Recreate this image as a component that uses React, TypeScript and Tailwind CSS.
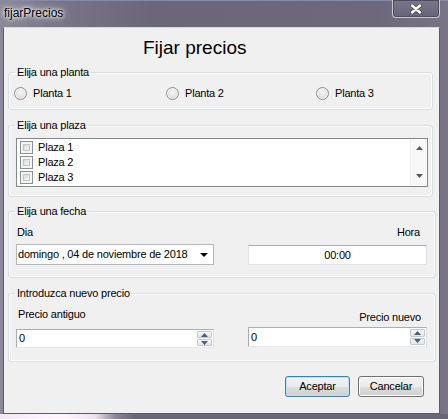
import React from "react";

function Group({ label, className, children }: { label: string; className: string; children?: React.ReactNode }) {
  return (
    <fieldset className={`border border-[#d5dfe5] rounded-[3px] ml-[4px] min-w-0 shadow-[inset_0_0_0_1px_#fbfbfb] ${className}`}>
      <legend className="ml-[6px] px-[2px] text-[11px] leading-[13px] tracking-[-0.2px]">{label}</legend>
      {children}
    </fieldset>
  );
}

function Radio({ label, w }: { label: string; w: string }) {
  return (
    <div className={`flex items-center gap-[6px] ${w}`}>
      <span className="w-[13px] h-[13px] rounded-full border border-[#8e8f8f] bg-[radial-gradient(circle_at_50%_40%,#f8f8f8_0%,#e4e4e4_50%,#c6c6c6_100%)] shadow-[inset_0_0_0_1px_#f6f6f6]" />
      <span className="text-[11px] leading-[13px] tracking-[-0.2px]">{label}</span>
    </div>
  );
}

function Check({ label }: { label: string }) {
  return (
    <div className="h-[15px] flex items-center gap-[5px]">
      <span className="w-[13px] h-[13px] border border-[#8e8f8f] bg-[#f4f4f4] p-[2px] flex">
        <span className="flex-1 border border-[#c4c4c4] bg-[linear-gradient(135deg,#d9d9d9,#f7f7f7)]" />
      </span>
      <span className="text-[11px] leading-[13px] tracking-[-0.2px]">{label}</span>
    </div>
  );
}

function Spinner() {
  return (
    <div className="w-[15px] h-full flex flex-col gap-[1px] py-[1px] mr-[1px]">
      <div className="flex-1 border border-[#c3c7cd] rounded-[1px] bg-[linear-gradient(#f7f7f7,#e2e4e7)] flex items-center justify-center">
        <svg width="7" height="4" viewBox="0 0 7 4"><path d="M0 4 L3.5 0 L7 4 Z" fill="#4b5e80" /></svg>
      </div>
      <div className="flex-1 border border-[#c3c7cd] rounded-[1px] bg-[linear-gradient(#f7f7f7,#e2e4e7)] flex items-center justify-center">
        <svg width="7" height="4" viewBox="0 0 7 4"><path d="M0 0 L7 0 L3.5 4 Z" fill="#4b5e80" /></svg>
      </div>
    </div>
  );
}

export default function App() {
  return (
    <div className="w-[448px] h-[419px] flex flex-col overflow-hidden font-['Liberation_Sans',Arial,sans-serif] text-black bg-[linear-gradient(90deg,#8c8998_0px,#7a7789_50px,#6b6779_150px,#6d697a_380px,#797586_448px)]">
      {/* title bar */}
      <div className="h-[27px] shrink-0 flex items-start shadow-[inset_0_1px_0_#7f8cb0]">
        <div className="pl-[4px] pt-[6px] text-[12px] leading-[14px] text-black [text-shadow:0_0_5px_#fff,0_0_3px_#fff,0_0_8px_#e8e4f0]">
          fijarPrecios
        </div>
        <div className="ml-auto mr-[8px] w-[48px] h-[18px] rounded-b-[4px] border border-t-0 border-[#c9c7d2] shadow-[inset_0_0_0_1px_#4f4c5c] bg-[linear-gradient(#7a778a,#67647a)] flex items-center justify-center">
          <svg width="12" height="10" viewBox="0 0 12 10">
            <path d="M2 1.5 L10 8.5 M10 1.5 L2 8.5" stroke="#4a4858" strokeWidth="4" strokeLinecap="round" />
            <path d="M2 1.5 L10 8.5 M10 1.5 L2 8.5" stroke="#ffffff" strokeWidth="2.4" strokeLinecap="round" />
          </svg>
        </div>
      </div>

      {/* client area */}
      <div className="h-[387px] shrink-0 ml-[3px] mr-[8px] border border-[#5d5b66] border-t-[#d9d8de] bg-[#f0f0f0] flex flex-col">
        <div className="mt-[8px] h-[24px] ml-[139px] text-[19px] leading-[24px]">Fijar precios</div>

        <Group label="Elija una planta" className="w-[425px] h-[44px] mt-[6px]">
          <div className="flex items-center pl-[5px] pt-[8px]">
            <Radio label="Planta 1" w="w-[152px]" />
            <Radio label="Planta 2" w="w-[150px]" />
            <Radio label="Planta 3" w="w-[100px]" />
          </div>
        </Group>

        <Group label="Elija una plaza" className="w-[425px] h-[78px] mt-[9px]">
          <div className="ml-[7px] mt-[6px] w-[412px] h-[49px] border border-[#828790] bg-white flex">
            <div className="flex-1 pt-[1px] pl-[3px] flex flex-col">
              <Check label="Plaza 1" />
              <Check label="Plaza 2" />
              <Check label="Plaza 3" />
            </div>
            <div className="w-[17px] h-full bg-[#f8f8f8] border-l border-[#eeeeee] flex flex-col justify-between items-center pt-[7px] pb-[8px]">
              <svg width="7" height="4" viewBox="0 0 7 4"><path d="M0 4 L3.5 0 L7 4 Z" fill="#5a5a5a" /></svg>
              <svg width="7" height="4" viewBox="0 0 7 4"><path d="M0 0 L7 0 L3.5 4 Z" fill="#5a5a5a" /></svg>
            </div>
          </div>
        </Group>

        <Group label="Elija una fecha" className="w-[428px] h-[73px] mt-[8px]">
          <div className="flex items-start">
            <div className="ml-[7px] w-[198px] pt-[8px] flex flex-col">
              <div className="pl-[1px] text-[11px] leading-[13px] tracking-[-0.2px]">Dia</div>
              <div className="mt-[5px] h-[21px] border border-[#b4b7bd] bg-white flex items-center pl-[1px] pr-[5px]">
                <span className="text-[11px] leading-[13px] tracking-[-0.2px]">domingo , 04 de noviembre de 2018</span>
                <svg className="ml-auto" width="8" height="4" viewBox="0 0 8 4"><path d="M0 0 L8 0 L4 4 Z" fill="#000" /></svg>
              </div>
            </div>
            <div className="ml-[34px] w-[179px] pt-[8px] flex flex-col">
              <div className="text-right pr-[7px] text-[11px] leading-[13px] tracking-[-0.2px]">Hora</div>
              <div className="mt-[6px] h-[20px] border border-[#dfe3e8] border-t-[#abadb3] bg-white flex items-center justify-center text-[11px] leading-[13px] tracking-[-0.2px]">
                00:00
              </div>
            </div>
          </div>
        </Group>

        <Group label="Introduzca nuevo precio" className="w-[428px] h-[75px] mt-[9px]">
          <div className="flex items-start">
            <div className="ml-[7px] w-[198px] pt-[8px] flex flex-col">
              <div className="pl-[2px] text-[11px] leading-[13px] tracking-[-0.2px]">Precio antiguo</div>
              <div className="mt-[8px] h-[19px] border border-[#abadb3] border-b-[#e3e9ef] border-r-[#dbdfe6] bg-white flex items-center">
                <span className="flex-1 pl-[2px] text-[11px] leading-[13px]">0</span>
                <Spinner />
              </div>
            </div>
            <div className="ml-[34px] w-[179px] pt-[11px] flex flex-col">
              <div className="text-right pr-[6px] text-[11px] leading-[13px] tracking-[-0.2px]">Precio nuevo</div>
              <div className="mt-[3px] h-[20px] border border-[#abadb3] border-b-[#e3e9ef] border-r-[#dbdfe6] bg-white flex items-center">
                <span className="flex-1 pl-[2px] text-[11px] leading-[13px]">0</span>
                <Spinner />
              </div>
            </div>
          </div>
        </Group>

        <div className="mt-[14px] flex justify-end pr-[15px] gap-[8px]">
          <button className="w-[65px] h-[21px] rounded-[3px] border border-[#3c7fb1] shadow-[inset_0_0_0_1px_#b8e4fb] bg-[linear-gradient(#f2f2f2_0%,#ebebeb_50%,#dddddd_51%,#cfcfcf_100%)] text-[11px] leading-[13px] tracking-[-0.2px]">
            Aceptar
          </button>
          <button className="w-[66px] h-[21px] rounded-[3px] border border-[#707070] shadow-[inset_0_0_0_1px_#fcfcfc] bg-[linear-gradient(#f2f2f2_0%,#ebebeb_50%,#dddddd_51%,#cfcfcf_100%)] text-[11px] leading-[13px] tracking-[-0.2px]">
            Cancelar
          </button>
        </div>
      </div>

      {/* bottom frame */}
      <div className="h-[5px] shrink-0 bg-[linear-gradient(90deg,#f3e6f3_0px,#fff6ff_60px,#efe2f0_95px,#8d8898_115px,#6a6677_135px,#6a6677_448px)]" />
    </div>
  );
}
